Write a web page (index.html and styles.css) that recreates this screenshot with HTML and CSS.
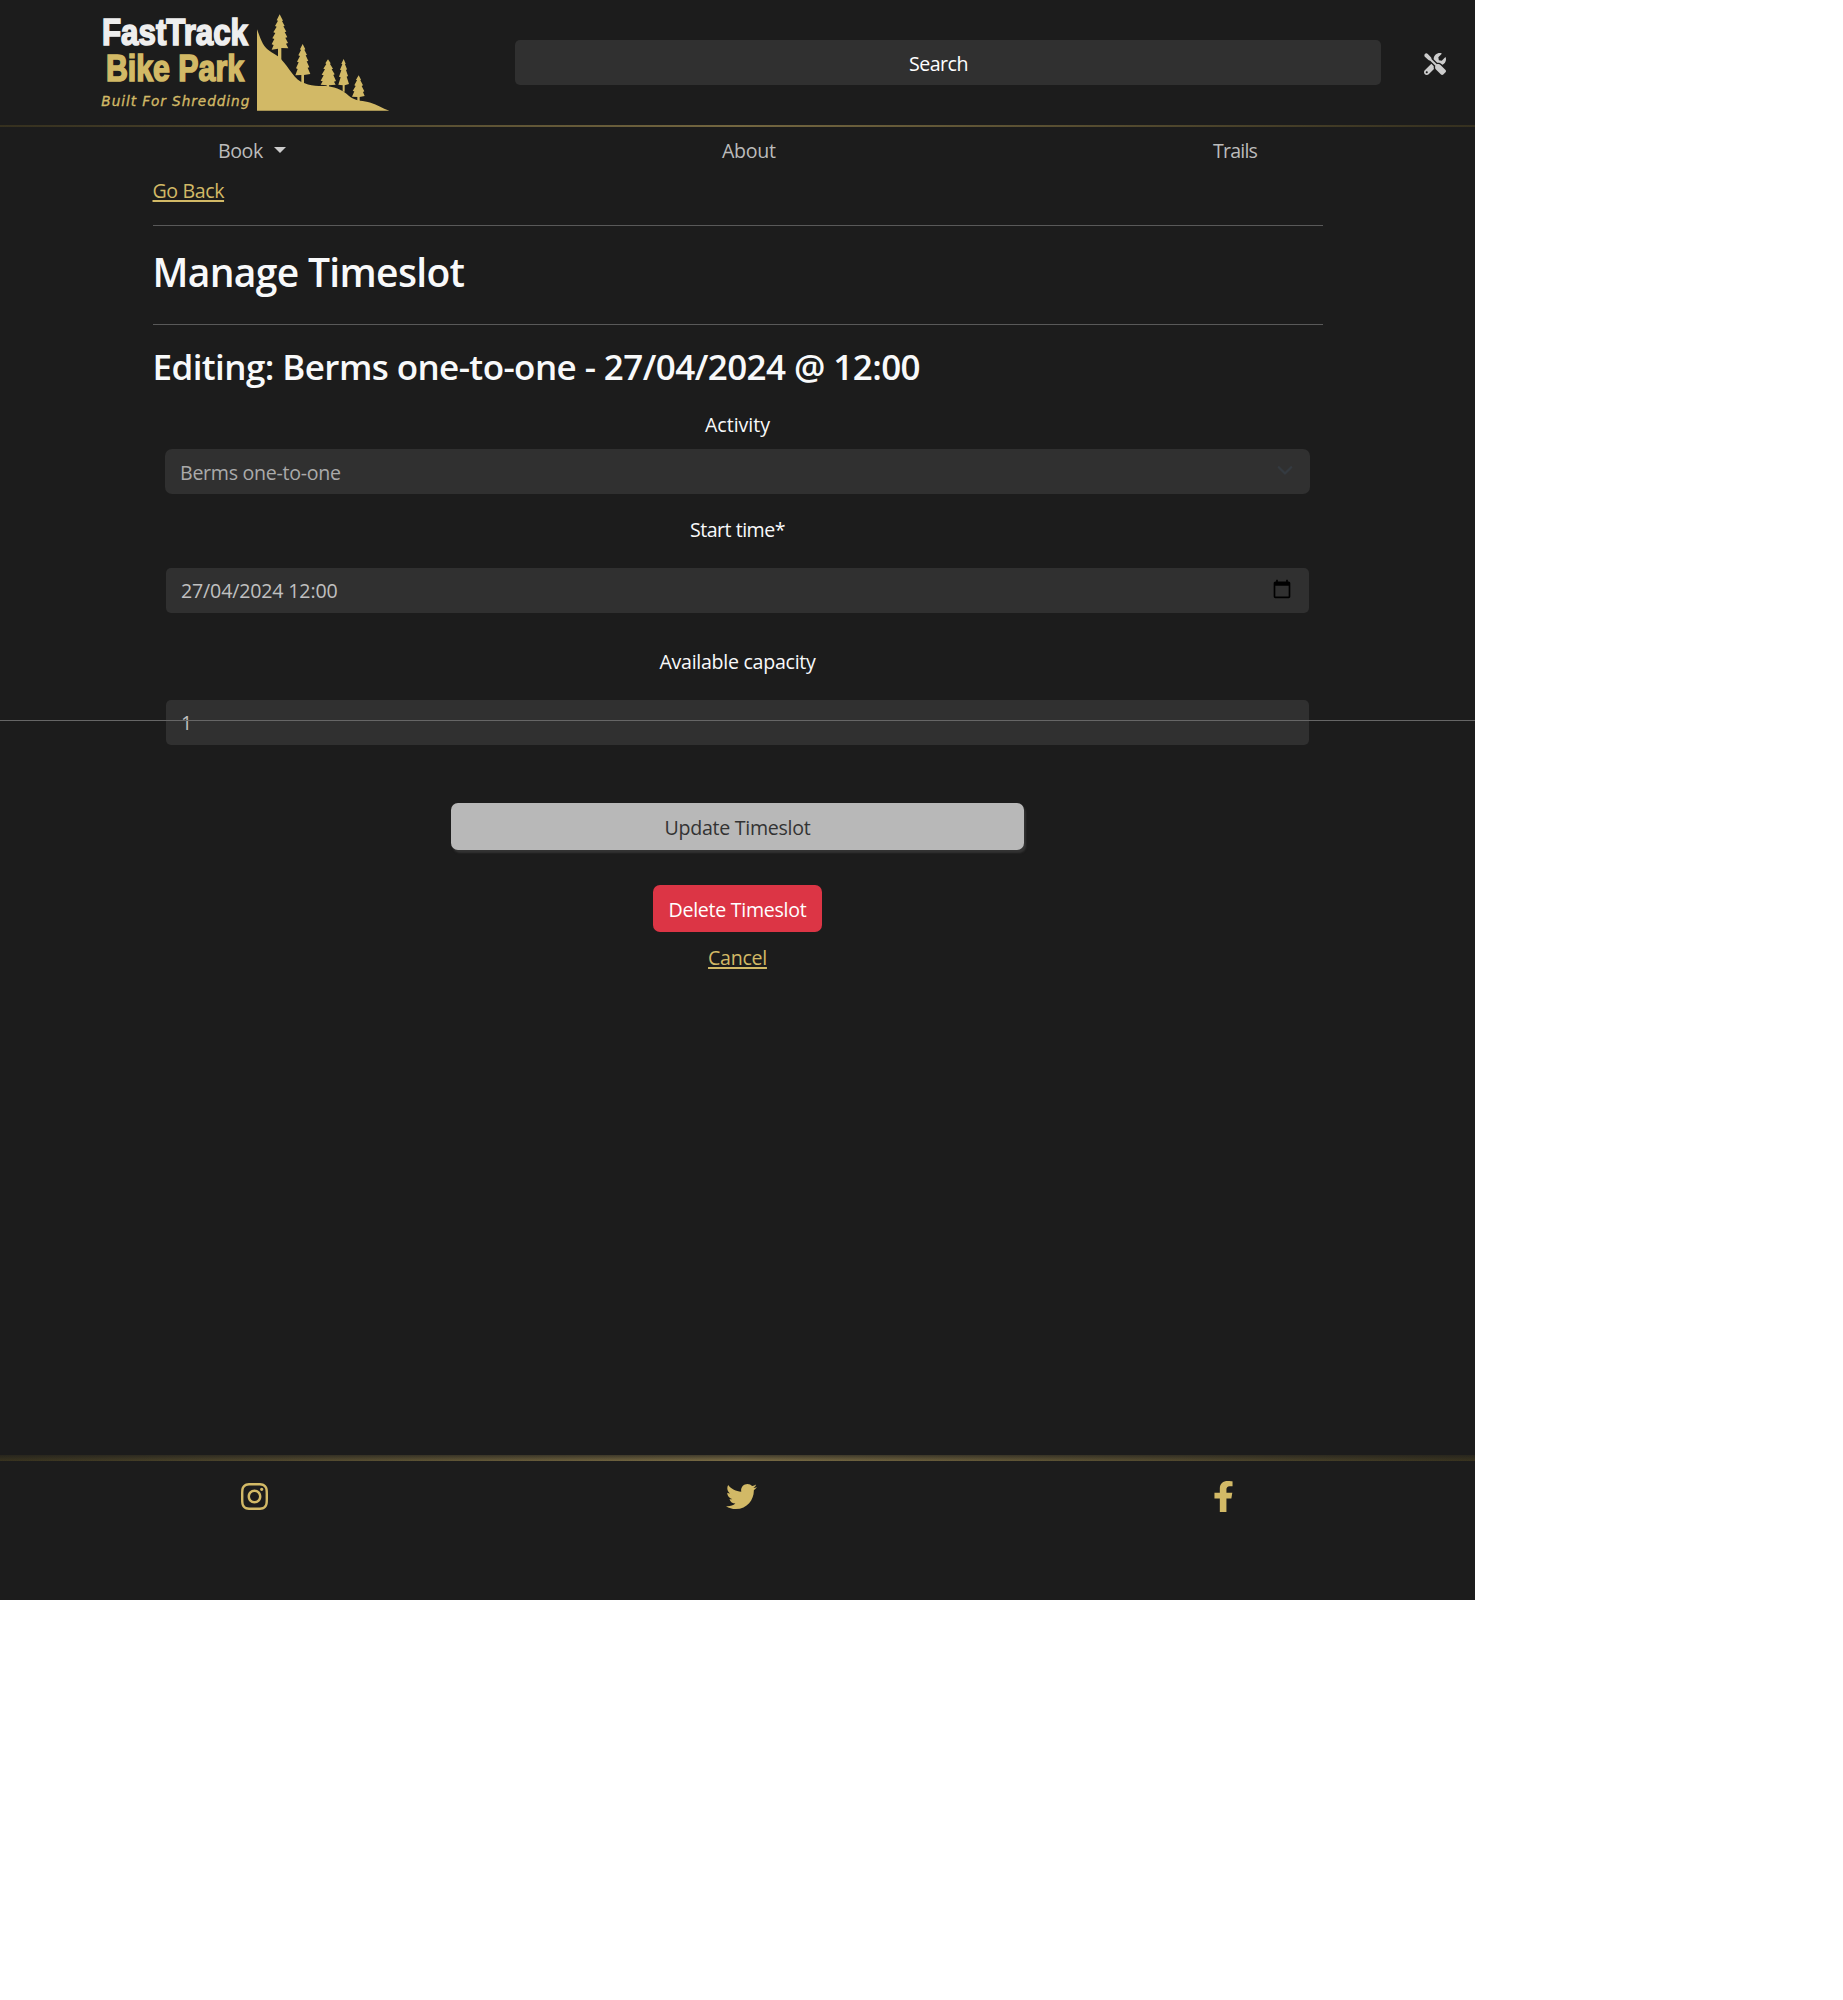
FILE: index.html
```html
<!DOCTYPE html>
<html lang="en">
<head>
<meta charset="utf-8">
<title>Manage Timeslot</title>
<link rel="stylesheet" href="styles.css">
</head>
<body>
<div class="page">
  <header class="header">
    <a class="logo">
      <svg width="330" height="120" viewBox="0 0 990 360">
        <g class="logo-name">
          <text class="logo-top" x="66" y="136" textLength="438" lengthAdjust="spacingAndGlyphs">FastTrack</text>
          <text class="logo-gold" x="78" y="244" textLength="414" lengthAdjust="spacingAndGlyphs">Bike Park</text>
        </g>
        <text class="logo-tag" x="64" y="317" textLength="444" lengthAdjust="spacing">Built For Shredding</text>
        <g fill="#d2b966">
          <path d="M531 88C540 112 548 138 564 149C578 160 592 165 602 176C628 202 642 240 674 250C700 262 735 256 752 260C782 265 797 278 812 292C830 304 850 302 872 308C892 314 906 324 928 332H531Z"/>
          <path d="M599 43L609 62L606 63L614 78L610 79L619 95L614 96L622 112L616 113L624 129L618 131L625 145L604 144V180H594V146L575 149L581 135L575 133L583 117L577 115L586 99L580 97L590 80L585 78L594 62L590 61Z"/>
          <path d="M668 132L676 148L673 149L681 165L677 166L685 183L680 184L688 202L683 203L691 222L672 225V252H664V225L646 226L653 207L648 205L656 187L651 185L660 168L655 166L663 150L660 148Z"/>
          <path d="M744 178L752 190L750 192L759 206L755 208L764 223L760 225L768 243L762 245L767 254L747 256V262H740V256L722 254L728 244L722 242L731 226L725 224L735 208L730 206L739 192L736 190Z"/>
          <path d="M791 177L797 191L795 193L801 208L798 210L804 228L800 230L807 252L794 256V275H788V256L775 254L782 232L777 230L784 211L780 209L787 193L784 191Z"/>
          <path d="M836 226L843 239L841 241L849 256L845 258L853 274L849 276L854 288L839 291V304H832V291L816 290L823 274L818 273L827 258L823 256L831 241L828 239Z"/>
        </g>
      </svg>
    </a>
    <div class="search">Search</div>
    <svg class="tools" width="22" height="22" viewBox="0 0 512 512"><path d="M501.1 395.7L384 278.6c-23.1-23.1-57.6-27.6-85.4-13.9L178 144C176 122 166 104 150 88L88 24C70 4 42 2 24 20S2 66 20 86L84 148C100 166 122 178 146 180L264.700 298.600c-13.6 27.8-9.2 62.3 13.9 85.4l117.1 117.1c14.6 14.6 38.2 14.6 52.7 0l52.7-52.7c14.5-14.6 14.5-38.2 0-52.7zM331.7 225c28.3 0 54.9 11 74.9 31l19.4 19.4c15.8-6.9 30.8-16.5 43.8-29.5 37.1-37.1 49.7-89.3 37.9-136.7-2.2-9-13.5-12.1-20.1-5.5l-74.4 74.4-67.9-11.3L334 98.9l74.4-74.4c6.6-6.6 3.4-17.9-5.7-20.2-47.4-11.7-99.6.9-136.6 37.9-28.5 28.5-41.9 66.1-41.2 103.6l82.1 82.1c8.1-1.9 16.5-2.9 24.7-2.9zm-103.9 82l-56.7-56.7L18.7 402.8c-25 25-25 65.5 0 90.5s65.5 25 90.5 0l123.6-123.6c-7.6-19.9-9.9-41.6-5-62.7zM64 472c-13.2 0-24-10.8-24-24 0-13.3 10.7-24 24-24s24 10.7 24 24c0 13.2-10.7 24-24 24z"/></svg>
  </header>
  <div class="header-line"></div>
  <nav class="nav">
    <a class="nav-book">Book<span class="caret"></span></a>
    <a class="nav-about">About</a>
    <a class="nav-trails">Trails</a>
  </nav>
  <main class="main">
    <div class="back"><a class="link">Go Back</a></div>
    <hr class="rule">
    <h1 class="title">Manage Timeslot</h1>
    <hr class="rule">
    <h2 class="subtitle">Editing: Berms one-to-one - 27/04/2024 @ 12:00</h2>
    <form class="form">
      <label class="label label-activity">Activity</label>
      <div class="field select"><span>Berms one-to-one</span>
        <svg class="chevron" width="20" height="20" viewBox="0 0 16 16"><path fill="none" stroke="#343a40" stroke-width="1.8" stroke-linecap="round" stroke-linejoin="round" d="m3 5 5 5 5-5"/></svg>
      </div>
      <label class="label label-time">Start time*</label>
      <div class="field time"><span>27/04/2024 12:00</span>
        <svg class="calendar" width="20" height="20" viewBox="0 0 24 24"><path d="M20 3h-1V1h-2v2H7V1H5v2H4c-1.100 0-2 .9-2 2v16c0 1.100.9 2 2 2h16c1.100 0 2-.9 2-2V5c0-1.100-.9-2-2-2zm0 18H4V8h16v13z"/></svg>
      </div>
      <label class="label label-cap">Available capacity</label>
      <div class="field"><span>1</span></div>
      <div class="btn update">Update Timeslot</div>
      <div class="btn delete">Delete Timeslot</div>
      <a class="link cancel">Cancel</a>
    </form>
  </main>
  <div class="overlay-rule"></div>
  <footer class="footer">
    <div class="footer-line"></div>
    <div class="social">
      <svg class="instagram" width="27" height="31" viewBox="0 0 448 512"><path d="M224.100 141c-63.600 0-114.900 51.300-114.900 114.900s51.300 114.900 114.900 114.900S339 319.500 339 255.900 287.700 141 224.100 141zm0 189.600c-41.100 0-74.700-33.500-74.700-74.700s33.500-74.700 74.700-74.700 74.700 33.500 74.700 74.700-33.600 74.700-74.700 74.700zm146.400-194.300c0 14.900-12 26.800-26.800 26.800-14.900 0-26.800-12-26.800-26.800s12-26.800 26.800-26.800 26.800 12 26.800 26.800zm76.100 27.200c-1.700-35.900-9.900-67.700-36.200-93.900-26.200-26.200-58-34.400-93.900-36.200-37-2.100-147.900-2.100-184.900 0-35.800 1.700-67.600 9.900-93.900 36.100s-34.400 58-36.200 93.900c-2.100 37-2.100 147.900 0 184.900 1.700 35.900 9.900 67.700 36.200 93.900s58 34.400 93.900 36.200c37 2.100 147.900 2.100 184.900 0 35.900-1.700 67.700-9.900 93.900-36.200 26.200-26.200 34.400-58 36.200-93.900 2.100-37 2.100-147.800 0-184.800zM398.800 388c-7.800 19.600-22.900 34.700-42.600 42.600-29.500 11.700-99.500 9-132.100 9s-102.700 2.600-132.100-9c-19.600-7.800-34.700-22.900-42.600-42.600-11.700-29.500-9-99.500-9-132.100s-2.600-102.700 9-132.100c7.800-19.600 22.900-34.700 42.600-42.600 29.500-11.700 99.500-9 132.100-9s102.700-2.600 132.100 9c19.600 7.800 34.700 22.900 42.600 42.600 11.700 29.500 9 99.500 9 132.100s2.700 102.700-9 132.100z"/></svg>
      <svg class="twitter" width="31" height="31" viewBox="0 0 512 512"><path d="M459.370 151.716c.325 4.548.325 9.097.325 13.645 0 138.720-105.583 298.558-298.558 298.558-59.452 0-114.680-17.219-161.137-47.106 8.447.974 16.568 1.299 25.340 1.299 49.055 0 94.213-16.568 130.274-44.832-46.132-.975-84.792-31.188-98.112-72.772 6.498.974 12.995 1.624 19.818 1.624 9.421 0 18.843-1.300 27.614-3.573-48.081-9.747-84.143-51.980-84.143-102.985v-1.299c13.969 7.797 30.214 12.670 47.431 13.319-28.264-18.843-46.781-51.005-46.781-87.391 0-19.492 5.197-37.360 14.294-52.954 51.655 63.675 129.300 105.258 216.365 109.807-1.624-7.797-2.599-15.918-2.599-24.040 0-57.828 46.782-104.934 104.934-104.934 30.213 0 57.502 12.670 76.670 33.137 23.715-4.548 46.456-13.320 66.599-25.340-7.798 24.366-24.366 44.833-46.132 57.827 21.117-2.273 41.584-8.122 60.426-16.243-14.292 20.791-32.161 39.308-52.628 54.253z"/></svg>
      <svg class="facebook" width="19" height="31" viewBox="16 0 288 512" preserveAspectRatio="none"><path d="M279.140 288l14.220-92.660h-88.910v-60.130c0-25.350 12.420-50.060 52.240-50.060h40.420V6.260S260.430 0 225.360 0c-73.220 0-121.080 44.380-121.080 124.720v70.620H22.890V288h81.390v224h100.170V288z"/></svg>
    </div>
  </footer>
</div>
</body>
</html>
```
FILE: styles.css
```css
* { box-sizing: border-box; }
body {
  margin: 0;
  background: #fff;
  font-family: "Segoe UI", "Open Sans", sans-serif;
  font-size: 19.6px;
  line-height: 30px;
  letter-spacing: -0.28px;
  color: #f8f9fa;
}
.page {
  position: relative;
  display: flex;
  flex-direction: column;
  width: 1475px;
  height: 1600px;
  background: #1c1c1c;
}
svg { display: block; flex: none; }
.header { display: flex; align-items: center; height: 125px; padding: 0 29px 0 80px; }
.logo { align-self: flex-start; margin-right: 105px; letter-spacing: 0; }
.logo-name {
  font-family: "Liberation Sans Narrow", "Liberation Sans", sans-serif;
  font-weight: 700;
  font-size: 110px;
  stroke-width: 5px;
}
.logo-top { fill: #eee; stroke: #eee; }
.logo-gold { fill: #d2b966; stroke: #d2b966; }
.logo-tag {
  fill: #d2b966;
  stroke: #d2b966;
  stroke-width: 1px;
  font-family: "DejaVu Sans", sans-serif;
  font-style: italic;
  font-size: 41px;
}
.search {
  width: 866px;
  height: 45px;
  padding: 9px 19px 0 0;
  border-radius: 5px;
  background: #303030;
  text-align: center;
  letter-spacing: -0.5px;
  color: #fff;
}
.tools { margin: 2px 0 0 43px; fill: #ccc; }
.header-line { height: 2px; background: linear-gradient(90deg, #35301f, #736640 50%, #35301f); }
.nav { display: flex; height: 48px; padding-top: 9px; color: #bbb; }
.nav a { display: flex; }
.nav-book { width: 502px; padding-left: 218px; letter-spacing: -0.45px; }
.caret {
  margin: 11px 0 0 11px;
  width: 12px;
  height: 6px;
  border: 6px solid transparent;
  border-top-color: #ccc;
  border-bottom: 0;
}
.nav-about { width: 491px; padding-left: 220px; }
.nav-trails { padding-left: 220px; letter-spacing: -0.8px; }
.main { display: flex; flex-direction: column; width: 1170px; margin: 0 auto; }
.link { color: #d2b966; text-decoration: underline; text-decoration-thickness: 2px; text-underline-offset: 2px; }
.rule { width: 100%; height: 1px; margin: 0; border: 0; background: #595959; }
.back { height: 50px; padding-top: 1px; letter-spacing: -0.4px; }
.title { height: 98px; margin: 0; padding-top: 22px; font-size: 39px; font-weight: 600; line-height: 48px; letter-spacing: -0.67px; }
.subtitle { height: 86px; margin: 0; padding-top: 20px; font-size: 35px; font-weight: 600; line-height: 44px; letter-spacing: -0.58px; }
.form { display: flex; flex-direction: column; align-items: center; }
.label { height: 38px; }
.label-activity { margin-top: -1px; height: 39px; letter-spacing: 0; }
.field {
  display: flex;
  justify-content: space-between;
  width: 1143px;
  height: 45px;
  padding: 8px 15px;
  border-radius: 5px;
  background: #303030;
  color: #c0c0c0;
}
.time { letter-spacing: -0.16px; }
.select { width: 1145px; padding-top: 9px; border-radius: 7px; color: #aaa; }
.chevron { margin: 3px 0 0; }
.label-time { height: 74px; padding-top: 21px; letter-spacing: -0.5px; }
.calendar { margin: 3px 2px 0; }
.label-cap { height: 87px; padding-top: 34px; }
.btn { border-radius: 7px; text-align: center; height: 47px; padding-top: 10px; }
.update { width: 573px; margin-top: 58px; background: #b8b8b8; color: #333; box-shadow: 2px 3px 2px #333; }
.delete { width: 169px; margin-top: 35px; background: #dc3545; color: #fff; }
.cancel { margin-top: 11px; }
.overlay-rule { position: absolute; top: 720px; left: 0; width: 100%; height: 1px; background: #666; }
.footer { margin-top: auto; height: 145px; }
.footer-line { height: 6px; background: linear-gradient(180deg, #1c1c1c99, transparent), linear-gradient(90deg, #38331f, #7b6d45 50%, #38331f); }
.social { display: flex; align-items: flex-start; padding-top: 20px; fill: #d2b966; }
.instagram { margin-left: 241px; }
.twitter { margin-left: 458px; }
.facebook { margin-left: 457px; }
```
